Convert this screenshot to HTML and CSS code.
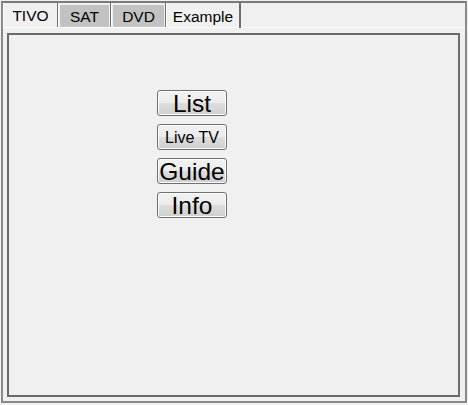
FILE: index.html
```html
<!DOCTYPE html>
<html>
<head>
<meta charset="utf-8">
<link rel="stylesheet" href="styles.css">
</head>
<body>
<div class="frame">
  <div class="tabbar">
    <div class="tab tab-tivo">TIVO</div>
    <div class="tab tab-sat"><span class="tab-fill">SAT</span></div>
    <div class="tab tab-dvd"><span class="tab-fill">DVD</span></div>
    <div class="tab tab-example">Example</div>
  </div>
  <div class="panel">
    <div class="box">
      <div class="buttons">
        <button class="btn big">List</button>
        <button class="btn small">Live TV</button>
        <button class="btn big">Guide</button>
        <button class="btn big">Info</button>
      </div>
    </div>
  </div>
</div>
</body>
</html>
```
FILE: styles.css
```css
html, body {
  margin: 0;
  padding: 0;
  background: #f0f0f0;
  font-family: "Liberation Sans", Arial, sans-serif;
}
.frame {
  margin: 1px;
  width: 466px;
  height: 402px;
  box-sizing: border-box;
  border: 2px solid #8a8a8a;
  border-top-color: #7a7a7a;
  background: #f0f0f0;
  display: flex;
  flex-direction: column;
}
.tabbar {
  display: flex;
  height: 24px;
  border-bottom: 1px solid #ffffff;
  flex: none;
}
.tab {
  box-sizing: border-box;
  height: 24px;
  border-left: 1px solid #ffffff;
  border-right: 1px solid #6e6e6e;
  font-size: 15.5px;
  color: #000;
  display: flex;
  align-items: center;
  justify-content: center;
}
.tab-tivo { width: 55px; padding-top: 2px; }
.tab-sat { width: 53px; }
.tab-dvd { width: 55px; }
.tab-example { width: 75px; height: 25px; padding-top: 3px; border-right-width: 2px; }
.tab-fill {
  flex: 1;
  align-self: stretch;
  margin: 2px 1px 0 1px;
  background: #c2c2c2;
  display: flex;
  align-items: center;
  justify-content: center;
  padding-top: 1px;
}
.panel {
  flex: 1;
  padding: 5px 5px 4px 4px;
  display: flex;
}
.box {
  flex: 1;
  border: 2px solid #6a6a6a;
  border-right-color: #6e6e6e;
}
.buttons {
  display: flex;
  flex-direction: column;
  align-items: flex-start;
  gap: 8px;
  padding-top: 55px;
  padding-left: 148px;
}
.btn {
  width: 70px;
  height: 26px;
  box-sizing: border-box;
  border: 1px solid #707070;
  border-radius: 3px;
  background: linear-gradient(#f2f2f2 0%, #ebebeb 50%, #dddddd 51%, #cfcfcf 100%);
  font-family: "Liberation Sans", Arial, sans-serif;
  color: #000;
  padding: 1px 0 0 0;
  margin: 0;
  line-height: 1;
  box-shadow: inset 0 0 0 1px #fcfcfc;
}
.btn.big { font-size: 24.5px; }
.btn.small { font-size: 16px; }
```
